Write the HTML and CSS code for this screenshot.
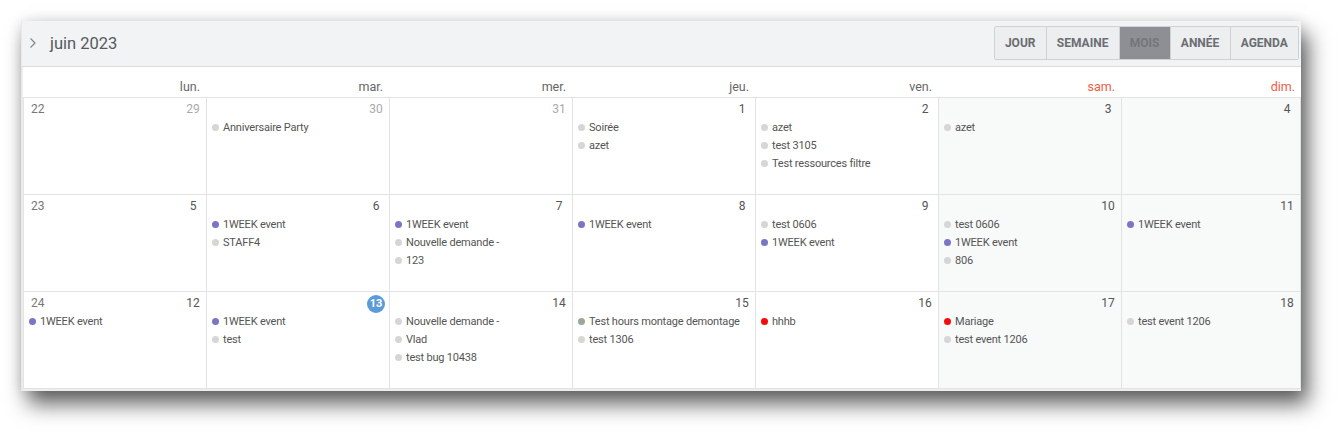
FILE: index.html
```html
<!DOCTYPE html>
<html lang="fr">
<head>
<meta charset="utf-8">
<link rel="stylesheet" href="styles.css">
</head>
<body>
<div class="panel">
  <div class="toolbar">
    <div class="title">
      <svg class="chev" width="10" height="14" viewBox="0 0 10 14"><path d="M2.5 2.5 L7 7 L2.5 11.5" fill="none" stroke="#8a8a8a" stroke-width="1.3"/></svg>
      <span>juin 2023</span>
    </div>
    <div class="views">
      <button class="vbtn">JOUR</button>
      <button class="vbtn">SEMAINE</button>
      <button class="vbtn active">MOIS</button>
      <button class="vbtn">ANNÉE</button>
      <button class="vbtn">AGENDA</button>
    </div>
  </div>
  <div class="heads">
    <div class="dh">lun.</div><div class="dh">mar.</div><div class="dh">mer.</div><div class="dh">jeu.</div><div class="dh">ven.</div><div class="dh we">sam.</div><div class="dh we">dim.</div>
  </div>
  <div class="grid">
    <!-- row 1 -->
    <div class="cell r1"><div class="top"><span class="wk">22</span><span class="num other">29</span></div></div>
    <div class="cell r1"><div class="top"><span></span><span class="num other">30</span></div>
      <div class="ev"><i class="dot g"></i>Anniversaire Party</div></div>
    <div class="cell r1"><div class="top"><span></span><span class="num other">31</span></div></div>
    <div class="cell r1"><div class="top"><span></span><span class="num">1</span></div>
      <div class="ev"><i class="dot g"></i>Soirée</div>
      <div class="ev"><i class="dot g"></i>azet</div></div>
    <div class="cell r1"><div class="top"><span></span><span class="num">2</span></div>
      <div class="ev"><i class="dot g"></i>azet</div>
      <div class="ev"><i class="dot g"></i>test 3105</div>
      <div class="ev"><i class="dot g"></i>Test ressources filtre</div></div>
    <div class="cell r1 wkend"><div class="top"><span></span><span class="num">3</span></div>
      <div class="ev"><i class="dot g"></i>azet</div></div>
    <div class="cell r1 wkend"><div class="top"><span></span><span class="num">4</span></div></div>
    <!-- row 2 -->
    <div class="cell"><div class="top"><span class="wk">23</span><span class="num">5</span></div></div>
    <div class="cell"><div class="top"><span></span><span class="num">6</span></div>
      <div class="ev"><i class="dot p"></i>1WEEK event</div>
      <div class="ev"><i class="dot g"></i>STAFF4</div></div>
    <div class="cell"><div class="top"><span></span><span class="num">7</span></div>
      <div class="ev"><i class="dot p"></i>1WEEK event</div>
      <div class="ev"><i class="dot g"></i>Nouvelle demande -</div>
      <div class="ev"><i class="dot g"></i>123</div></div>
    <div class="cell"><div class="top"><span></span><span class="num">8</span></div>
      <div class="ev"><i class="dot p"></i>1WEEK event</div></div>
    <div class="cell"><div class="top"><span></span><span class="num">9</span></div>
      <div class="ev"><i class="dot g"></i>test 0606</div>
      <div class="ev"><i class="dot p"></i>1WEEK event</div></div>
    <div class="cell wkend"><div class="top"><span></span><span class="num">10</span></div>
      <div class="ev"><i class="dot g"></i>test 0606</div>
      <div class="ev"><i class="dot p"></i>1WEEK event</div>
      <div class="ev"><i class="dot g"></i>806</div></div>
    <div class="cell wkend"><div class="top"><span></span><span class="num">11</span></div>
      <div class="ev"><i class="dot p"></i>1WEEK event</div></div>
    <!-- row 3 -->
    <div class="cell"><div class="top"><span class="wk">24</span><span class="num">12</span></div>
      <div class="ev"><i class="dot p"></i>1WEEK event</div></div>
    <div class="cell"><div class="top"><span></span><span class="num today">13</span></div>
      <div class="ev"><i class="dot p"></i>1WEEK event</div>
      <div class="ev"><i class="dot g"></i>test</div></div>
    <div class="cell"><div class="top"><span></span><span class="num">14</span></div>
      <div class="ev"><i class="dot g"></i>Nouvelle demande -</div>
      <div class="ev"><i class="dot g"></i>Vlad</div>
      <div class="ev"><i class="dot g"></i>test bug 10438</div></div>
    <div class="cell"><div class="top"><span></span><span class="num">15</span></div>
      <div class="ev"><i class="dot s"></i>Test hours montage demontage</div>
      <div class="ev"><i class="dot g"></i>test 1306</div></div>
    <div class="cell"><div class="top"><span></span><span class="num">16</span></div>
      <div class="ev"><i class="dot r"></i>hhhb</div></div>
    <div class="cell wkend"><div class="top"><span></span><span class="num">17</span></div>
      <div class="ev"><i class="dot r"></i>Mariage</div>
      <div class="ev"><i class="dot g"></i>test event 1206</div></div>
    <div class="cell wkend"><div class="top"><span></span><span class="num">18</span></div>
      <div class="ev"><i class="dot g"></i>test event 1206</div></div>
  </div>
</div>
</body>
</html>
```

FILE: styles.css
```css
html, body {
  margin: 0;
  padding: 0;
  background: #ffffff;
}
body {
  font-family: Roboto, "Liberation Sans", sans-serif;
  color: #555;
  padding: 21px 0 0 21px;
  height: 433px;
  box-sizing: border-box;
}
.panel {
  width: 1280px;
  height: 370px;
  overflow: hidden;
  background: #eeeeee;
  box-sizing: border-box;
  border-left: 1px solid #e8e8e8;
  box-shadow: 7px 13px 20px rgba(0,0,0,0.62), 0 0 12px rgba(0,0,0,0.12);
}
.toolbar {
  height: 46px;
  box-sizing: border-box;
  background: #f2f3f4;
  border-bottom: 1px solid #dcdcdc;
  display: flex;
  align-items: center;
  justify-content: space-between;
  padding: 0 2px 0 6px;
}
.title {
  display: flex;
  align-items: center;
  gap: 12px;
  font-size: 16.5px;
  color: #555a60;
}
.chev { display: block; margin-top: -2px; }
.views {
  display: flex;
  margin-top: -2px;
  border: 1px solid #cfd1d3;
  border-radius: 2px;
  overflow: hidden;
}
.vbtn {
  font-family: Roboto, "Liberation Sans", sans-serif;
  font-weight: 700;
  font-size: 12px;
  color: #6a6d72;
  background: #eceeef;
  border: none;
  border-left: 1px solid #cfd1d3;
  height: 32px;
  padding: 0 10.2px;
  cursor: pointer;
}
.vbtn:first-child { border-left: none; }
.vbtn.active {
  background: #8e8f95;
  color: #74767b;
}
.heads, .grid {
  display: grid;
  grid-template-columns: repeat(6, 183px) minmax(0, 1fr);
  margin-left: 1px;
  background: #fff;
}
.heads {
  height: 31px;
  border-bottom: 1px solid #e3e3e3;
  box-sizing: border-box;
  align-items: end;
}
.dh {
  text-align: right;
  font-size: 12.5px;
  color: #666;
  padding: 0 6px 3px 0;
}
.dh.we { color: #ee5b45; }
.grid {
  grid-template-rows: 97px 97px 97px;
  border-left: 1px solid #e3e3e3;
}
.cell {
  border-right: 1px solid #e3e3e3;
  border-bottom: 1px solid #e3e3e3;
  padding: 3px 4px 0 5px;
  box-sizing: border-box;
  background: #fff;
  min-width: 0;
  overflow: hidden;
}
.cell.wkend { background: #f8f9f9; }
.top {
  display: flex;
  justify-content: space-between;
  align-items: center;
  height: 16px;
  font-size: 12px;
  margin-bottom: 1px;
}
.wk { color: #777; padding-left: 2px; }
.num {
  color: #555;
  width: 18px;
  text-align: center;
}
.num.other { color: #aaa; }
.num.today {
  height: 18px;
  border-radius: 50%;
  background: #5b9bd8;
  color: #fff;
  font-weight: 700;
  font-size: 11px;
  line-height: 18px;
  margin-top: 1px;
}
.ev {
  display: flex;
  align-items: center;
  height: 18px;
  font-size: 11px;
  letter-spacing: -0.2px;
  color: #555;
  white-space: nowrap;
}
.dot {
  width: 7px;
  height: 7px;
  border-radius: 50%;
  margin: 0 4px 0 0;
  flex: none;
}
.dot.g { background: #d6d6d6; }
.dot.p { background: #7b76c4; }
.dot.r { background: #f30d0d; }
.dot.s { background: #9ca79c; }
```
